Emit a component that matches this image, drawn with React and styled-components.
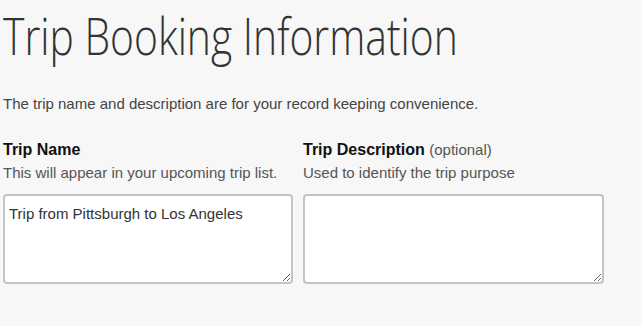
import React from 'react';
import styled, { createGlobalStyle } from 'styled-components';

const GlobalStyle = createGlobalStyle`
  html, body {
    margin: 0;
    padding: 0;
    background: #f7f7f7;
  }
  body {
    font-family: "Liberation Sans", Arial, sans-serif;
    color: #333;
  }
`;

export default function App() {
  return (
    <>
      <GlobalStyle />
      <Page>
        <Title>Trip Booking Information</Title>
        <Intro>The trip name and description are for your record keeping convenience.</Intro>
        <Fields>
          <Field>
            <Label>Trip Name</Label>
            <Hint>This will appear in your upcoming trip list.</Hint>
            <Box defaultValue="Trip from Pittsburgh to Los Angeles" />
          </Field>
          <Field>
            <Label>
              Trip Description <Optional>(optional)</Optional>
            </Label>
            <Hint>Used to identify the trip purpose</Hint>
            <Box />
          </Field>
        </Fields>
      </Page>
    </>
  );
}

const Page = styled.div`
  padding: 5px 0 0 3px;
`;

const Title = styled.h1`
  margin: 0;
  font-family: "Open Sans", sans-serif;
  font-weight: 300;
  font-size: 52px;
  line-height: 60px;
  color: #333;
  transform: scaleX(0.785);
  transform-origin: left center;
  white-space: nowrap;
`;

const Intro = styled.p`
  margin: 30px 0 0;
  font-size: 15px;
  line-height: 18px;
  color: #444;
`;

const Fields = styled.div`
  display: grid;
  grid-template-columns: 290px 301px;
  column-gap: 10px;
  margin-top: 27px;
`;

const Field = styled.div`
  display: flex;
  flex-direction: column;
`;

const Label = styled.div`
  font-size: 16px;
  font-weight: 700;
  line-height: 20px;
  color: #111;
`;

const Optional = styled.span`
  font-weight: 400;
  font-size: 15px;
  color: #555;
`;

const Hint = styled.div`
  margin-top: 4px;
  font-size: 15px;
  line-height: 18px;
  color: #555;
`;

const Box = styled.textarea`
  margin-top: 12px;
  height: 90px;
  box-sizing: border-box;
  border: 2px solid #c4c4c4;
  border-radius: 4px;
  background: #fff;
  padding: 9px 4px 7px;
  font-family: "Liberation Sans", Arial, sans-serif;
  font-size: 15px;
  line-height: 18px;
  color: #333;
  resize: vertical;
`;
